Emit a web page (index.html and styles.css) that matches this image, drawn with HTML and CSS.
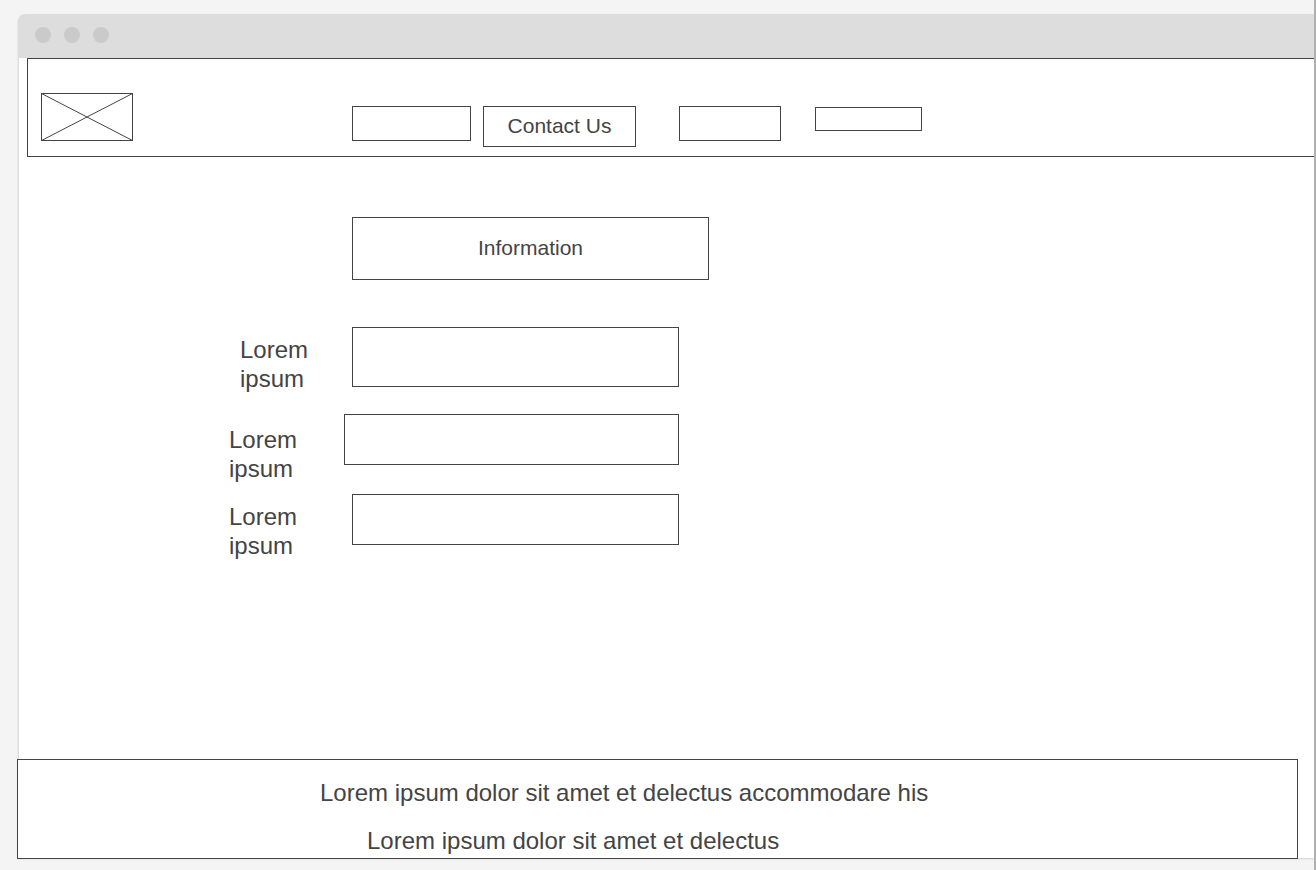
FILE: index.html
```html
<!DOCTYPE html>
<html lang="en">
<head>
<meta charset="utf-8">
<meta name="viewport" content="width=device-width, initial-scale=1">
<title>Contact Us</title>
<link rel="stylesheet" href="styles.css">
</head>
<body>
<div class="canvas">
  <div class="window">
    <div class="titlebar">
      <span class="dot"></span>
      <span class="dot"></span>
      <span class="dot"></span>
    </div>
    <header class="header">
      <svg class="logo" width="92" height="48" viewBox="0 0 92 48" role="img" aria-label="Logo">
        <rect x="0.5" y="0.5" width="91" height="47"/>
        <path d="M0.5 0.5L91.5 47.5M91.5 0.5L0.5 47.5"/>
      </svg>
      <nav class="nav">
        <a class="box nav-first" href="#" aria-label="Home"></a>
        <a class="box nav-contact" href="#">Contact Us</a>
        <a class="box nav-third" href="#" aria-label="About"></a>
        <a class="box nav-fourth" href="#" aria-label="More"></a>
      </nav>
    </header>
    <main class="main">
      <h1 class="box heading">Information</h1>
      <form class="form">
        <div class="field field-first">
          <label class="label" for="field-1">Lorem ipsum</label>
          <input class="box input" id="field-1" type="text">
        </div>
        <div class="field field-second">
          <label class="label" for="field-2">Lorem ipsum</label>
          <input class="box input" id="field-2" type="text">
        </div>
        <div class="field field-third">
          <label class="label" for="field-3">Lorem ipsum</label>
          <input class="box input" id="field-3" type="text">
        </div>
      </form>
    </main>
    <footer class="box footer">
      <p class="footer-main">Lorem ipsum dolor sit amet et delectus accommodare his</p>
      <p class="footer-sub">Lorem ipsum dolor sit amet et delectus</p>
    </footer>
  </div>
</div>
</body>
</html>
```
FILE: styles.css
```css
* {
  box-sizing: border-box;
}

body {
  margin: 0;
  background: #f4f4f4;
  color: #444;
  font: 24px/29px "Liberation Sans", Arial, sans-serif;
}

.canvas {
  display: flex;
  min-height: 100vh;
  padding: 14px 0 12px 18px;
  border-right: 2px solid #b0b0b0;
}

.window {
  flex: 1;
  display: flex;
  flex-direction: column;
  background: #fff;
  border-left: 1px solid #ddd;
  border-radius: 7px 0 0 0;
  box-shadow: 0 1px 2px rgba(0, 0, 0, 0.14);
  clip-path: inset(-4px 0 -4px -4px);
}

.titlebar {
  display: flex;
  gap: 13px;
  height: 44px;
  padding: 13px 16px;
  background: #ddd;
  border-radius: 6px 0 0 0;
}

.dot {
  width: 16px;
  height: 16px;
  border-radius: 50%;
  background: #cacaca;
}

.box {
  display: block;
  margin: 0;
  border: 1px solid #444;
  border-radius: 0;
  background: #fff;
  color: inherit;
  text-decoration: none;
}

.header {
  display: flex;
  align-items: flex-start;
  margin-left: 8px;
  padding: 34px 13px 15px;
  border: 1px solid #444;
  border-right: 0;
}

.logo {
  flex: none;
  fill: none;
  stroke: #444;
}

.nav {
  display: flex;
  align-items: flex-start;
  margin: 13px 0 -6px 219px;
}

.nav-first {
  width: 119px;
  height: 35px;
}

.nav-contact {
  width: 153px;
  margin-left: 12px;
  padding: 4px 0 6px;
  font-size: 21px;
  text-align: center;
}

.nav-third {
  width: 102px;
  height: 35px;
  margin-left: 43px;
}

.nav-fourth {
  width: 107px;
  height: 24px;
  margin: 1px 0 0 34px;
}

.main {
  flex: 1;
  padding: 60px 0 40px;
}

.heading {
  width: 357px;
  margin-left: 333px;
  padding: 15px 16px 17px;
  font-size: 21px;
  font-weight: 400;
  text-align: center;
}

.form {
  width: 660px;
  margin-top: 47px;
  padding-left: 210px;
}

.field {
  display: flex;
  align-items: flex-start;
}

.label {
  flex: none;
  width: 123px;
  padding: 8px 30px 0 0;
}

.input {
  flex: 1;
  min-width: 0;
  height: 51px;
  padding: 0 12px;
  font: inherit;
}

.field-first {
  margin-bottom: 21px;
}

.field-first .label {
  width: 112px;
  margin-left: 11px;
}

.field-first .input {
  height: 60px;
}

.field-second {
  margin-bottom: 11px;
}

.field-second .label {
  width: 115px;
  padding-top: 11px;
}

.footer {
  margin: 0 16px -1px -2px;
  padding: 18px 16px 3px 302px;
}

.footer p {
  margin: 0;
}

.footer .footer-sub {
  margin: 19px 0 0 47px;
}
```
